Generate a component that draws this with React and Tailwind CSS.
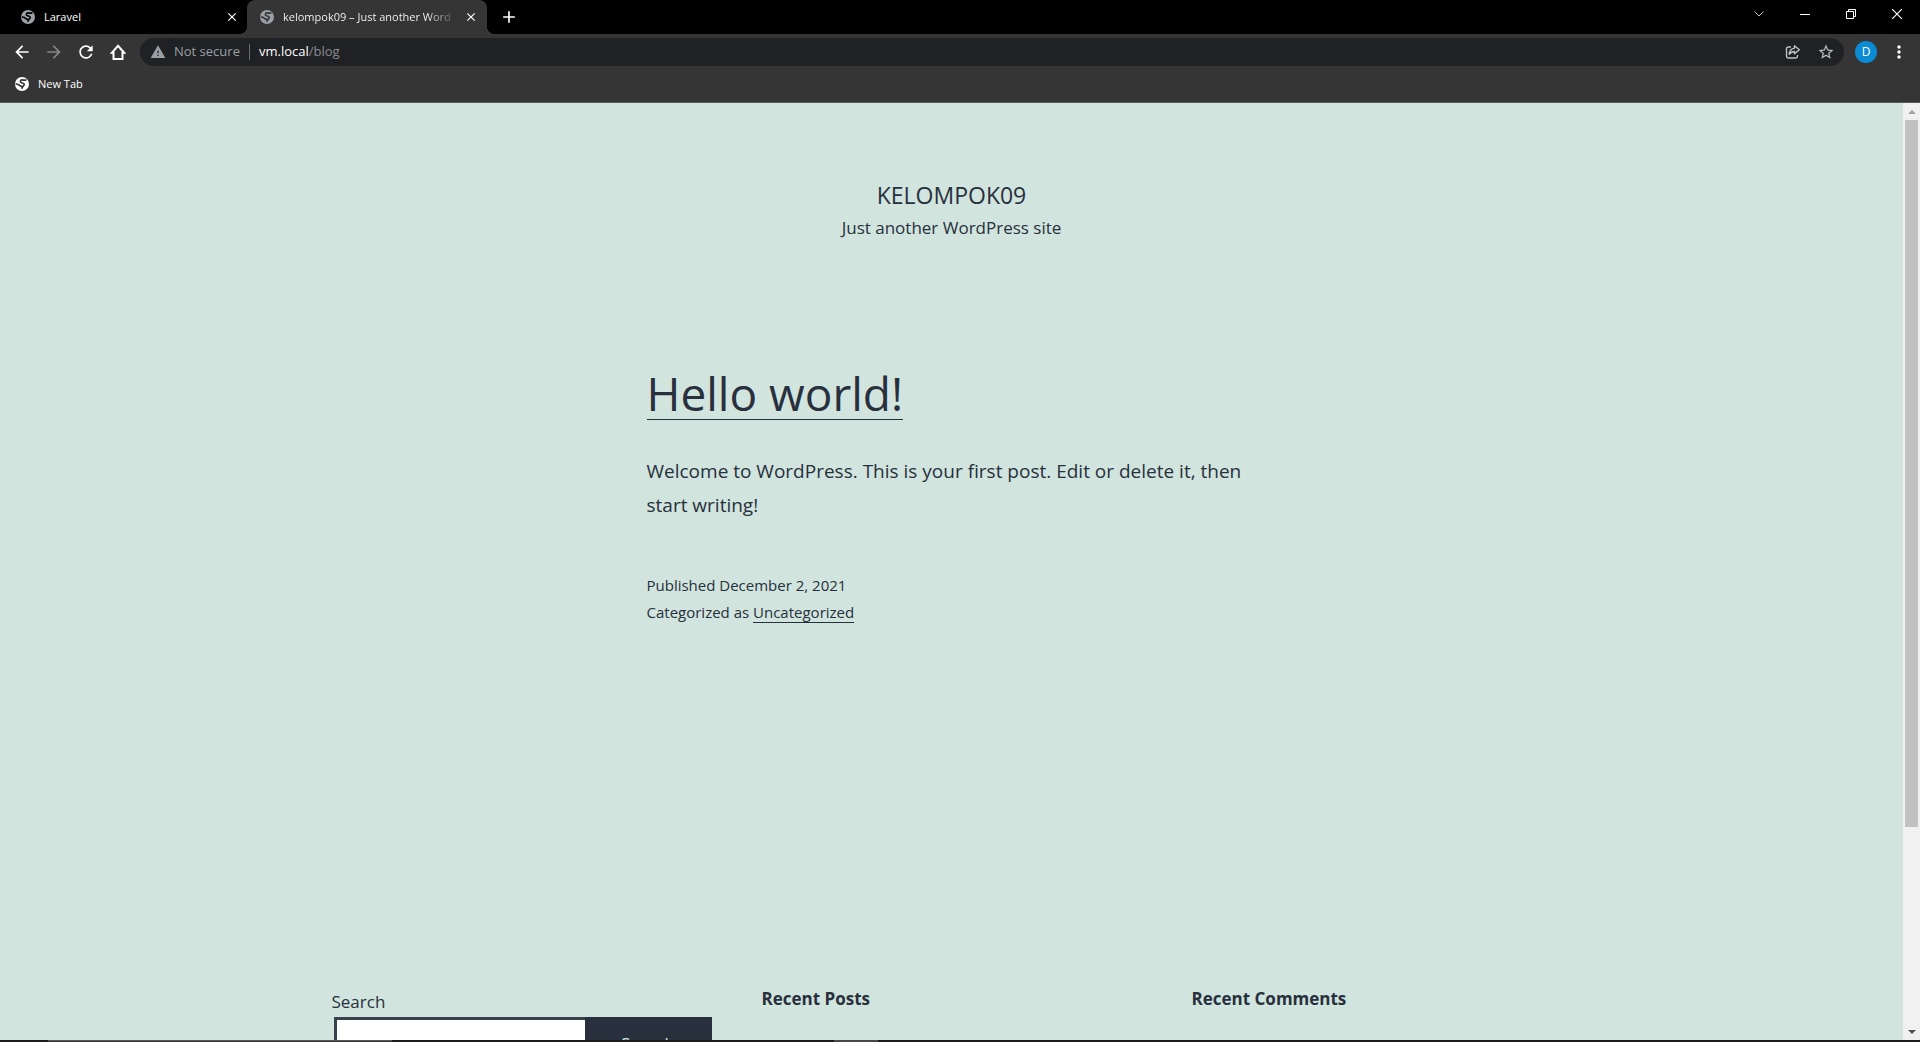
import {
  MdArrowBack,
  MdArrowForward,
  MdRefresh,
  MdWarning,
  MdStarBorder,
  MdMoreVert,
  MdAdd,
  MdClose,
} from "react-icons/md";

function GlobeIcon({ className }) {
  return (
    <svg viewBox="0 0 16 16" className={`size-4 shrink-0 ${className}`}>
      <circle cx="8" cy="8" r="7" fill="currentColor" stroke="none" />
      <g fill="none" strokeWidth="1.700" strokeLinecap="round" strokeLinejoin="round">
        <path d="M11.800 3.900C10.300 4.800 9.300 3.700 7.800 3.900 6 4.100 6 6.300 7.500 6.800c1.300.4 2.500.2 2.700 1.600.2 1.400-1.800 1.500-2.200 3.800" />
        <path d="M2.400 8c1.700.1 2.500.6 3.500 1.700l1.900.9" />
      </g>
    </svg>
  );
}

function HomeIcon() {
  return (
    <svg viewBox="0 0 16 16" className="size-4" fill="none" stroke="currentColor" strokeWidth="2">
      <path d="M1.800 8.800 8 1.800l6.200 7H12.500V15h-9V8.800z" />
    </svg>
  );
}

function ShareIcon() {
  return (
    <svg viewBox="0 0 16 16" className="size-4" fill="none" stroke="currentColor" strokeWidth="1.400">
      <path d="M6 3H3.200A1.700 1.700 0 0 0 1.500 4.700v7.600A1.700 1.700 0 0 0 3.200 14h7.600a1.700 1.700 0 0 0 1.700-1.700V11" />
      <path d="M9.500 1.800 14.300 5.800 9.500 9.800V7.500C7 7.500 5.600 8.300 4.200 10.300 4.500 7 6.200 4.500 9.500 4.100Z" strokeLinejoin="round" />
    </svg>
  );
}

function WindowButtons() {
  return (
    <div className="flex h-7 items-center">
      <button aria-label="Search tabs" className="flex h-7 w-[46px] items-center justify-center">
        <svg viewBox="0 0 10 6" className="h-[6px] w-[10px]" fill="none" stroke="#c8c8c8"><path d="M.5.5 5 5 9.500.5" /></svg>
      </button>
      <button aria-label="Minimize" className="flex h-7 w-[46px] items-center justify-center">
        <span className="h-px w-[10px] bg-white" />
      </button>
      <button aria-label="Restore" className="flex h-7 w-[46px] items-center justify-center">
        <svg viewBox="0 0 10 10" className="size-[10px]" fill="none" stroke="#fff"><path d="M.5 2.500h7v7h-7zM2.500 2.500v-2h7v7h-2" /></svg>
      </button>
      <button aria-label="Close window" className="flex h-7 w-[46px] items-center justify-center">
        <svg viewBox="0 0 10 10" className="size-[10px]" fill="none" stroke="#fff" strokeWidth="1.200"><path d="m0 0 10 10M10 0 0 10" /></svg>
      </button>
    </div>
  );
}

function TabStrip() {
  return (
    <header className="flex h-[34px] shrink-0 items-start justify-between bg-black">
      <div className="flex h-full items-stretch">
        <div className="flex w-[247px] items-center pl-5 pr-2">
          <GlobeIcon className="stroke-black text-[#9aa0a6]" />
          <span className="ml-2 grow text-[11px]">Laravel</span>
          <button aria-label="Close Laravel tab"><MdClose className="size-[14px] stroke-current" /></button>
        </div>
        <div className="relative flex w-[240px] items-center rounded-t-lg bg-[#353535] pl-3 pr-[9px]">
          <span className="absolute bottom-0 right-full size-2 bg-[radial-gradient(circle_at_0_0,black_8px,#353535_8px)]" />
          <span className="absolute bottom-0 left-full size-2 bg-[radial-gradient(circle_at_100%_0,black_8px,#353535_8px)]" />
          <GlobeIcon className="stroke-[#353535] text-[#9aa0a6]" />
          <span className="ml-2 whitespace-nowrap bg-linear-to-r from-white from-85% to-[#606060] bg-clip-text text-[11px] text-transparent">
            kelompok09 – Just another Word
          </span>
          <button aria-label="Close kelompok09 tab" className="ml-auto"><MdClose className="size-[14px] stroke-current" /></button>
        </div>
        <button aria-label="New tab" className="ml-3 flex items-center"><MdAdd className="size-5 stroke-current" /></button>
      </div>
      <WindowButtons />
    </header>
  );
}

function Toolbar() {
  return (
    <div className="flex h-9 shrink-0 items-center bg-[#353535]">
      <nav className="flex items-center pl-[6px]">
        <button aria-label="Back" className="flex w-8 justify-center"><MdArrowBack className="size-5 stroke-current" /></button>
        <button aria-label="Forward" className="flex w-8 justify-center text-[#868686]"><MdArrowForward className="size-5 stroke-current" /></button>
        <button aria-label="Reload" className="flex w-8 justify-center"><MdRefresh className="size-5 stroke-current" /></button>
        <button aria-label="Home" className="flex w-8 justify-center"><HomeIcon /></button>
      </nav>
      <div className="ml-[6px] flex h-7 grow items-center rounded-full bg-[#202124] pl-[10px] pr-[9px] text-[13px]">
        <MdWarning className="size-4 text-[#9aa0a6]" />
        <span className="ml-2 text-[#9aa0a6]">Not secure</span>
        <span className="mx-[9px] h-4 w-px bg-[#6b6e72]" />
        <span className="grow">vm.local<span className="text-[#8a8d91]">/blog</span></span>
        <button aria-label="Share" className="mr-4 text-[#bdc1c6]"><ShareIcon /></button>
        <button aria-label="Bookmark" className="text-[#bdc1c6]"><MdStarBorder className="size-[18px]" /></button>
      </div>
      <button aria-label="Profile" className="ml-[11px] flex size-[22px] items-center justify-center rounded-full bg-[#0a8bd4] text-[12px]">D</button>
      <button aria-label="Menu" className="ml-3 mr-[11px]"><MdMoreVert className="size-5" /></button>
    </div>
  );
}

function ScrollBar() {
  return (
    <div className="flex w-[17px] shrink-0 flex-col items-center justify-between bg-[#f1f1f1]">
      <div className="flex h-[17px] items-center"><svg viewBox="0 0 8 4" className="h-1 w-2" fill="#a3a3a3"><path d="M0 4 4 0l4 4z" /></svg></div>
      <div className="grid w-[13px] grow grid-rows-[18fr_5fr]"><div className="bg-[#c1c1c1]" /></div>
      <div className="flex h-[17px] items-center"><svg viewBox="0 0 8 4" className="h-1 w-2" fill="#505050"><path d="M0 0h8L4 4z" /></svg></div>
    </div>
  );
}

function TaskbarEdge() {
  return (
    <div className="flex h-[2px] shrink-0 bg-[#1c1a1d] pl-12">
      <div className="w-[344px] border-t border-[#5a5a5a] bg-[#353535]" />
      <div className="ml-[442px] w-11 bg-[#4a4849]" />
    </div>
  );
}

export default function App() {
  return (
    <div className="flex h-screen flex-col overflow-hidden font-['Open_Sans',sans-serif] text-white">
      <TabStrip />
      <Toolbar />
      <div className="flex h-[33px] shrink-0 items-start border-b border-[#5c5c5c] bg-[#353535] pl-[14px] pt-[6px]">
        <button className="flex items-center gap-2 text-[11px] leading-4"><GlobeIcon className="stroke-[#353535]" />New Tab</button>
      </div>
      <div className="flex min-h-0 grow text-[#28303d]">
        <div className="grow overflow-hidden bg-[#d1e4dd]">
          <header className="pt-[72px] text-center">
            <h1 className="text-[23px] leading-10 uppercase">kelompok09</h1>
            <p className="text-[17px] leading-[26px]">Just another WordPress site</p>
          </header>
          <main className="mx-auto h-[726px] max-w-[610px] pt-[120px]">
            <h2 className="text-[46px] font-normal"><a href="#post" className="block h-[59px] w-fit border-b border-[#28303d] leading-[64px]">Hello world!</a></h2>
            <p className="mt-[34px] text-[19px] leading-[34px]">Welcome to WordPress. This is your first post. Edit or delete it, then start writing!</p>
            <div className="mt-[50px] text-[15px] leading-[27px]">
              <p>Published December 2, 2021</p>
              <p>Categorized as <a href="#uncategorized" className="underline underline-offset-4">Uncategorized</a></p>
            </div>
          </main>
          <footer className="mx-auto grid max-w-[1240px] grid-cols-3 gap-[50px] text-[17px]">
            <form>
              <label htmlFor="q" className="block pt-5 leading-[30px]">Search</label>
              <div className="ml-[2px] flex">
                <input id="q" className="h-[54px] min-w-0 grow border-[3px] border-r-0 border-[#39414d] bg-white" />
                <button type="button" className="h-[54px] w-[127px] bg-[#28303d] text-[#d1e4dd]">Search</button>
              </div>
            </form>
            <h3 className="pt-5 leading-6 font-bold">Recent Posts</h3>
            <h3 className="pt-5 leading-6 font-bold">Recent Comments</h3>
          </footer>
        </div>
        <ScrollBar />
      </div>
      <TaskbarEdge />
    </div>
  );
}
